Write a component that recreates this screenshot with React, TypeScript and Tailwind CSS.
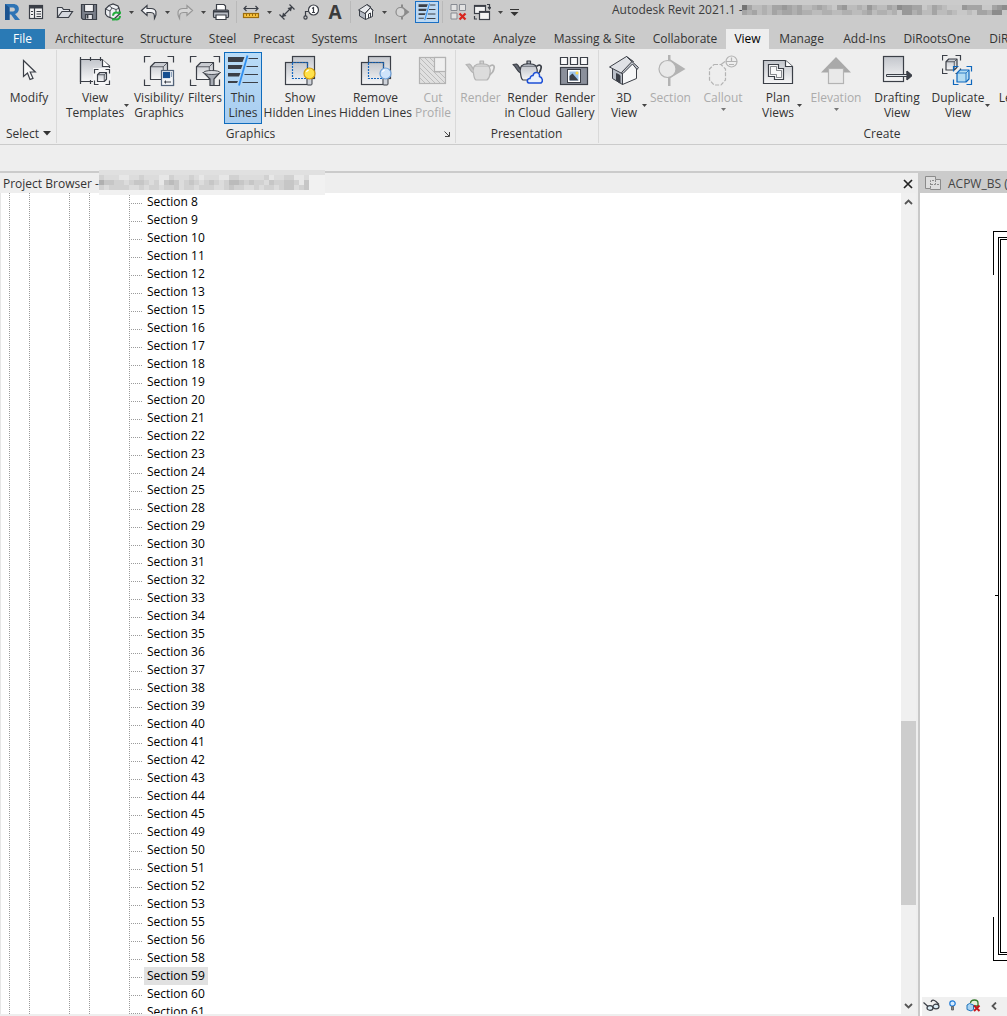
import { useState } from 'react';
import type { ReactNode } from 'react';

const INK = '#3b3f47';
const DIM = '#b3b3b3';

const tabs = [
  { name: 'Architecture', width: 'w-[85px]' },
  { name: 'Structure', width: 'w-[68px]' },
  { name: 'Steel', width: 'w-[45px]' },
  { name: 'Precast', width: 'w-[58px]' },
  { name: 'Systems', width: 'w-[63px]' },
  { name: 'Insert', width: 'w-[49px]' },
  { name: 'Annotate', width: 'w-[69px]' },
  { name: 'Analyze', width: 'w-[61px]' },
  { name: 'Massing & Site', width: 'w-[99px]' },
  { name: 'Collaborate', width: 'w-[82px]' },
  { name: 'View', width: 'w-[43px]' },
  { name: 'Manage', width: 'w-[65px]' },
  { name: 'Add-Ins', width: 'w-[61px]' },
  { name: 'DiRootsOne', width: 'w-[84px]' },
  { name: 'DiRoots', width: 'w-[64px]' },
];

const sections = [
  8, 9, 10, 11, 12, 13, 15, 16, 17, 18, 19, 20, 21, 22, 23, 24, 25,
  28, 29, 30, 31, 32, 33, 34, 35, 36, 37, 38, 39, 40, 41, 42, 43, 44, 45,
  49, 50, 51, 52, 53, 55, 56, 58, 59, 60, 61,
];

// Grey levels of the redacted names, one hex digit per block, one string per row
const titleMosaic = [
  '59bbab9989a9bba9abc98bbab8abb9a78899cb9abccc8999cc9879bc8999',
  '9a9bab9a99a9aabbaabbaabba9baabac88a9bb9bbabccbc99a77ccb9a9aa',
];
const browserMosaic = [
  'cdddeeddcdddeecdddcdedddeeccdddddceddcceed',
  '9bbccdcbbcdcebabdcbcdcbcdcaabcbccdbccbbceb',
  'cdccccddcdccdccbdccdcccddcbccddcdccdcbbdcb',
];

function Mosaic({ rows, step, base }: { rows: string[]; step: number; base: number }) {
  return (
    <svg width={rows[0].length * 5} height={rows.length * 5} className="shrink-0" shapeRendering="crispEdges" aria-hidden="true">
      {rows.map((row, y) =>
        row.split('').map((c, x) => {
          const v = base + parseInt(c, 16) * step;
          return <rect key={`${x}-${y}`} x={x * 5} y={y * 5} width={5} height={5} fill={`rgb(${v},${v},${v})`} />;
        })
      )}
    </svg>
  );
}

function Small({ children, size = 18 }: { children: ReactNode; size?: number }) {
  return (
    <svg width={size} height={size} viewBox="0 0 18 18" fill="none" stroke={INK} strokeWidth="1.2" aria-hidden="true">
      {children}
    </svg>
  );
}

function Large({ children, stroke = INK }: { children: ReactNode; stroke?: string }) {
  return (
    <svg width="32" height="32" viewBox="0 0 32 32" fill="none" stroke={stroke} strokeWidth="1.2" className="shrink-0" aria-hidden="true">
      <defs>
        <linearGradient id="sheet" x1="0" y1="0" x2="0" y2="1">
          <stop offset="0" stopColor="#c3c6cc" />
          <stop offset="1" stopColor="#f6f6f7" />
        </linearGradient>
      </defs>
      {children}
    </svg>
  );
}

function Caret({ className = '' }: { className?: string }) {
  return (
    <svg width="5" height="3" viewBox="0 0 5 3" className={className} aria-hidden="true">
      <path d="M0 0H5L2.5 3Z" fill="#444" />
    </svg>
  );
}

function QatButton({ label, children, active }: { label: string; children: ReactNode; active?: boolean }) {
  return (
    <button
      aria-label={label}
      className={`flex h-[22px] w-6 shrink-0 items-center justify-center ${active ? 'border border-[#1a6fc4] bg-[#bcd8f2]' : ''}`}
    >
      {children}
    </button>
  );
}

function QatArrow({ label }: { label: string }) {
  return (
    <button aria-label={label} className="flex h-[22px] w-3 shrink-0 items-center justify-center">
      <Caret />
    </button>
  );
}

function Divider() {
  return <div className="mr-[2px] ml-[3px] h-[22px] w-px shrink-0 bg-[#b9b9b9]" />;
}

function Cube({ x, y, s, fill = 'url(#sheet)', stroke = INK }: { x: number; y: number; s: number; fill?: string; stroke?: string }) {
  const d = s / 4;
  return (
    <g stroke={stroke} strokeLinejoin="round">
      <path d={`M${x} ${y + d}L${x + d} ${y}H${x + s}V${y + s - d}L${x + s - d} ${y + s}H${x}Z`} fill={fill} />
      <path d={`M${x} ${y + d}H${x + s - d}V${y + s}M${x + s - d} ${y + d}L${x + s} ${y}`} strokeWidth="0.8" />
    </g>
  );
}

function Brackets({ x, y, s, l, stroke = INK }: { x: number; y: number; s: number; l: number; stroke?: string }) {
  return (
    <path
      stroke={stroke}
      d={`M${x} ${y + l}V${y}H${x + l}M${x + s - l} ${y}H${x + s}V${y + l}M${x + s} ${y + s - l}V${y + s}H${x + s - l}M${x + l} ${y + s}H${x}V${y + s - l}`}
    />
  );
}

function ThinLinesShape() {
  return (
    <>
      <path d="M1 2H17.5L15.5 7H1ZM1 10H15.5L14 14H1ZM1 18H13.5L12 21.5H1ZM1 26H11L10 28H1Z" fill={INK} stroke="none" />
      <path d="M21.5 3.5H31M19.5 11.5H31M17.5 19.5H31M15.5 27.5H31" />
      <path d="M20.500 0.500L12 30.500" stroke="#2f8ff0" strokeWidth="1.800" />
    </>
  );
}

function Teapot({ dim }: { dim?: boolean }) {
  return (
    <g stroke={dim ? DIM : INK} strokeLinejoin="round">
      <path d="M9.500 11C7 14 9 24.500 11 25H22C25 23 26.500 16 24 11Z" fill={dim ? '#dcdcdc' : 'url(#sheet)'} />
      <path d="M9.500 11C12 8 21 8 24 11M15 8.500V6H18.500V8.500" fill={dim ? '#d2d2d2' : '#aeb3bc'} />
      <path d="M8.700 18C5 17 4.500 12 1 9.500L4.500 9C7 10.500 7 13 8.800 14.500" fill={dim ? '#c6c6c6' : '#666b75'} />
      <path d="M24.500 11.500C27 9 30 10 29 13.500C28.500 17 26 19 24.500 20" strokeWidth="1.700" />
    </g>
  );
}

function LayeredSheets({ bulb, glow }: { bulb: string; glow: string }) {
  return (
    <>
      <rect x="8.500" y="1.500" width="22" height="22" fill="url(#sheet)" />
      <rect x="1.500" y="7.500" width="22" height="22" fill="url(#sheet)" />
      <path d="M8.500 8V23.500H23.500M8.500 7.500H23.500V22" stroke="#1567c0" strokeDasharray="2 1" />
      <rect x="23" y="23" width="5" height="7" rx="1" fill="#cfd3da" strokeWidth="1" />
      <circle cx="25.500" cy="18.500" r="5.500" fill={bulb} stroke={glow} />
      <path d="M22.500 17C23 15.500 24 15 25 15" stroke="#fff" strokeWidth="1.200" />
    </>
  );
}

const icons: Record<string, ReactNode> = {
  Modify: (
    <Large>
      <path d="M10.500 5.500V21.500L14.500 18L17 24.500L20 23.300L17.200 17H22.300Z" fill="#f8f8f8" />
    </Large>
  ),
  'View Templates': (
    <Large>
      <path d="M1.500 4.500H23L30.500 11V26.500H1.500Z" fill="url(#sheet)" />
      <path d="M23.500 4.500V11.500H30.500" fill="#fff" />
      <path d="M1.500 2V29M11.500 2V6M21.500 2V6M11.500 25V29" />
      <rect x="14" y="13" width="18" height="18" fill="#f5f5f6" stroke="none" />
      <Brackets x={15.5} y={14.5} s={15} l={4} />
      <Cube x={18.500} y={17.500} s={9} />
    </Large>
  ),
  'Visibility/ Graphics': (
    <Large>
      <Brackets x={1.5} y={1.5} s={29} l={6} />
      <Cube x={7.5} y={7.5} s={17} />
      <rect x="18.500" y="15.500" width="12" height="15" fill="#f3f5f8" stroke="#53637a" />
      <rect x="20.500" y="17.500" width="6" height="5" fill="#174f91" stroke="#174f91" />
      <path d="M28.500 17V22" stroke="#8ba0bb" />
      <path d="M21 27H28M22.500 25.500V28.500" strokeWidth="1" />
    </Large>
  ),
  Filters: (
    <Large>
      <Brackets x={1.5} y={1.5} s={29} l={6} />
      <Cube x={7.5} y={7.5} s={17} />
      <path d="M14.500 17.500L21 24V30.500H25V24L31 17.500Z" fill="#a7abb3" />
      <ellipse cx="22.800" cy="17.500" rx="8.200" ry="2" fill="#d8dadf" strokeWidth="0.900" />
    </Large>
  ),
  'Thin Lines': <Large><ThinLinesShape /></Large>,
  'Show Hidden Lines': <Large><LayeredSheets bulb="#ffe14a" glow="#d29a08" /></Large>,
  'Remove Hidden Lines': <Large><LayeredSheets bulb="#cfe4fb" glow="#6d9fd6" /></Large>,
  'Cut Profile': (
    <Large stroke={DIM}>
      <rect x="2.500" y="2.500" width="26" height="26" fill="#e0e0e0" />
      <path d="M3 8L23 28M3 13L18 28M3 18L13 28M3 23L8 28M3 3L28 28M8 3L17 12M13 3L17 7M17 17H22L28 23" strokeWidth="0.800" />
      <rect x="17.500" y="2.500" width="11" height="14" fill="#efefef" />
    </Large>
  ),
  Render: <Large><Teapot dim /></Large>,
  'Render in Cloud': (
    <Large>
      <Teapot />
      <path d="M17 28C14.500 27.500 14.800 23.500 18 23.500C18.500 20.500 20 20.500 21 20.500C22 16 28 17 27.500 21.500C30.500 22.500 31.500 26.500 29 28Z" fill="#e9f0fb" stroke="#1c4fd6" strokeWidth="1.500" />
    </Large>
  ),
  'Render Gallery': (
    <Large>
      <path d="M1.500 2.500H8.500V9.500H1.500ZM11.500 2.500H18.500V9.500H11.500ZM21.500 2.500H28.500V9.500H21.500Z" fill="#fbfbfb" />
      <rect x="1.500" y="12.500" width="27" height="17" fill="#8b909b" />
      <rect x="8.500" y="14.500" width="13" height="13" fill="#fff" strokeWidth="1" />
      <rect x="10.500" y="16.500" width="9" height="9" fill="#9dc3ea" stroke="none" />
      <path d="M10.500 25.500V21L13.500 18.500L19.500 25.500Z" fill={INK} stroke="none" />
      <circle cx="18" cy="18" r="1.500" fill="#ffd94a" stroke="none" />
    </Large>
  ),
  '3D View': (
    <Large>
      <g strokeLinejoin="round" strokeWidth="1">
        <path d="M4.500 13V23.500L14.500 29.500V17.500L9 13Z" fill="#b9bec7" />
        <path d="M14.500 17L24.500 7.500L28.500 12.500V23.500L14.500 29.500Z" fill="#f6f7f8" />
        <path d="M8.500 25.500V18.500L12 20.500V28Z" fill={INK} />
        <path d="M1.500 12L18.500 1.500L25.500 6.500L14 18.500Z" fill="#dfe1e5" />
        <path d="M18.500 1.500L30.500 12.500L29 14.500L24.500 9L15 18.500L13.500 17.500L24 6.500Z" fill="#c3c7ce" />
      </g>
    </Large>
  ),
  Section: (
    <Large stroke={DIM}>
      <path d="M13 0V31H15.500V23L30.500 14L15.500 4.500V0Z" fill={DIM} stroke="none" />
      <circle cx="12.500" cy="14" r="8.500" fill="#e9e9e9" />
    </Large>
  ),
  Callout: (
    <Large stroke={DIM}>
      <path d="M7 9.500H14L18.500 14V25L14 30H7L2.500 25V14Z" strokeDasharray="4 1.500" />
      <path d="M14 9.500L18 6.500" />
      <circle cx="24.500" cy="6.500" r="5.500" />
      <path d="M19 6.500H30M24.500 2.500V6M22 9.500H27" />
    </Large>
  ),
  'Plan Views': (
    <Large>
      <path d="M1.500 5.500H23.500L30.500 11.500V28.500H1.500Z" fill="url(#sheet)" />
      <path d="M23.500 5.500V11.500H30.500" fill="#fff" />
      <path d="M6.500 9.500H16.500V13.500H21.500V24.500H12.500V21.500H6.500Z" fill="#f8f8f9" />
      <path d="M8.500 11.500H14.500V15.500H19.500V22.500H14.500V19.500H8.500Z" strokeWidth="0.600" />
    </Large>
  ),
  Elevation: (
    <Large stroke={DIM}>
      <path d="M16 2L31 17.500H1Z" fill="#a9a9a9" stroke="none" />
      <rect x="8.500" y="13.500" width="15" height="15" fill="#e9e9e9" />
    </Large>
  ),
  'Drafting View': (
    <Large>
      <rect x="2.500" y="1.500" width="20" height="25" fill="url(#sheet)" />
      <path d="M5.500 19.500H26V16L31 20.500L26 25V21.500H5.500Z" fill="#dfe5ea" strokeWidth="1" />
      <path d="M26 16L31 20.500L26 25Z" fill={INK} strokeWidth="1" />
    </Large>
  ),
  'Duplicate View': (
    <Large>
      <Brackets x={0.5} y={0.5} s={18} l={5} />
      <Cube x={4} y={4} s={11} />
      <Brackets x={11.5} y={11.5} s={18} l={5} stroke="#0d67bd" />
      <Cube x={15} y={15} s={12} fill="#b4dcf2" stroke="#0d67bd" />
    </Large>
  ),
  Legends: (
    <Large>
      <rect x="3.500" y="2.500" width="24" height="26" fill="url(#sheet)" />
      <path d="M8 8H14M17 8H24M8 14H14M17 14H24M8 20H14M17 20H24" />
    </Large>
  ),
};

type Tool = {
  name: string;
  lines: string[];
  width: string;
  arrow?: 'side' | 'below';
  disabled?: boolean;
  active?: boolean;
};

const panels: { title: string; className: string; titlePad: string; launcher?: boolean; tools: Tool[] }[] = [
  {
    title: 'Graphics',
    className: 'w-[399px] pl-[9px]',
    titlePad: 'pr-5',
    launcher: true,
    tools: [
      { name: 'View Templates', lines: ['View', 'Templates'], width: 'w-[58px]', arrow: 'side' },
      { name: 'Visibility/ Graphics', lines: ['Visibility/', 'Graphics'], width: 'w-[54px]' },
      { name: 'Filters', lines: ['Filters'], width: 'w-[38px]' },
      { name: 'Thin Lines', lines: ['Thin', 'Lines'], width: 'w-[38px]', active: true },
      { name: 'Show Hidden Lines', lines: ['Show', 'Hidden Lines'], width: 'w-[76px]' },
      { name: 'Remove Hidden Lines', lines: ['Remove', 'Hidden Lines'], width: 'w-[75px]' },
      { name: 'Cut Profile', lines: ['Cut', 'Profile'], width: 'w-[40px]', disabled: true },
    ],
  },
  {
    title: 'Presentation',
    className: 'w-[143px] pl-[3px]',
    titlePad: 'pr-1',
    tools: [
      { name: 'Render', lines: ['Render'], width: 'w-[43px]', disabled: true },
      { name: 'Render in Cloud', lines: ['Render', 'in Cloud'], width: 'w-[51px]' },
      { name: 'Render Gallery', lines: ['Render', 'Gallery'], width: 'w-[44px]' },
    ],
  },
  {
    title: 'Create',
    className: 'w-[564px] pl-[7px]',
    titlePad: 'pr-1',
    tools: [
      { name: '3D View', lines: ['3D', 'View'], width: 'w-[36px]', arrow: 'side' },
      { name: 'Section', lines: ['Section'], width: 'w-[41px]', disabled: true },
      { name: 'Callout', lines: ['Callout'], width: 'w-[48px] ml-2', arrow: 'below', disabled: true },
      { name: 'Plan Views', lines: ['Plan', 'Views'], width: 'w-[38px] ml-3', arrow: 'side' },
      { name: 'Elevation', lines: ['Elevation'], width: 'w-[54px] ml-1', arrow: 'below', disabled: true },
      { name: 'Drafting View', lines: ['Drafting', 'View'], width: 'w-[52px] ml-2' },
      { name: 'Duplicate View', lines: ['Duplicate', 'View'], width: 'w-[54px] ml-2', arrow: 'side' },
      { name: 'Legends', lines: ['Legends'], width: 'w-[50px] ml-1', arrow: 'below' },
    ],
  },
];

function ToolButton({ tool }: { tool: Tool }) {
  return (
    <>
      <button
        disabled={tool.disabled}
        className={`flex h-[72px] shrink-0 flex-col items-center border pt-[2px] leading-[15px] whitespace-nowrap ${tool.width} ${
          tool.active ? 'border-[#0f6cbd] bg-linear-to-b from-[#b9dcf8] to-[#a9cdef]' : 'border-transparent'
        } ${tool.disabled ? 'text-[#ababab]' : 'text-[#333]'}`}
      >
        {icons[tool.name]}
        <span className="mt-[3px] flex flex-col items-center">
          {tool.lines.map(line => <span key={line}>{line}</span>)}
        </span>
        {tool.arrow === 'below' && <Caret className="mt-[3px] opacity-70" />}
      </button>
      {tool.arrow === 'side' && (
        <button aria-label={`${tool.name} options`} className="flex h-[72px] w-2 shrink-0 items-end justify-start pb-[17px]">
          <Caret />
        </button>
      )}
    </>
  );
}

function QuickAccess() {
  return (
    <div className="flex h-[29px] items-start pt-px">
      <div className="flex shrink-0">
        <QatButton label="Revit">
          <svg width="18" height="20" viewBox="0 0 18 20" aria-hidden="true">
            <path fillRule="evenodd" d="M2 2H10C18 2 17 11 12 12L17 18H12L8 12.500H6.500V18H2ZM6.500 5.500V9.500H10C12.500 9.500 12.500 5.500 10 5.500Z" fill="#2f74b5" />
            <path d="M2 2L6.500 5.500V18H2Z" fill="#1d5490" />
          </svg>
        </QatButton>
        <QatButton label="Recent files">
          <Small>
            <rect x="2.500" y="2.500" width="13" height="13" fill="#f3f3f3" />
            <path d="M2.500 4H15.500" strokeWidth="3" />
            <path d="M7.500 5V15.500M4 8.500H6M4 11.500H6M9.500 8.500H14M9.500 11H14M9.500 13.500H14" />
          </Small>
        </QatButton>
      </div>
      <div className="ml-[5px] flex shrink-0">
        <QatButton label="Open">
          <Small>
            <path d="M1.500 14.500V4.500H6L7.500 6.500H13.500V8.500" fill="#e6e8ec" />
            <path d="M1.500 14.500L6 8.500H16.500L12.500 14.500Z" fill="#d5d8de" />
          </Small>
        </QatButton>
        <QatButton label="Save">
          <Small>
            <path d="M1.500 1.500H16.500V16.500H3L1.500 15Z" fill="#7a7f89" />
            <path d="M4.500 1.500H13.500V8.500H4.500Z" fill="#f0f0f1" />
            <path d="M5.500 11.500H12.500V16.500H5.500Z" fill="#e6e6e8" />
            <path d="M7.500 12V15.500" strokeWidth="1.800" />
          </Small>
        </QatButton>
        <QatButton label="Synchronize">
          <Small>
            <path d="M1.500 6L5 2.500L9 1L14 3L15.500 7V11L10 16L3.500 13.500L1.500 11Z" fill="#eef0f3" />
            <path d="M1.500 6L6 8L8 5L12 6.500L15.500 5M6 8V14.500M5 2.500L8 5M12 6.500V10" strokeWidth="0.900" />
            <circle cx="12.500" cy="13" r="3.500" stroke="#21ae3c" strokeWidth="2" strokeDasharray="8 3" />
            <path d="M14 8.500L17 11.500V8.500ZM8 14.500V17.500L11 17.500Z" fill="#21ae3c" stroke="none" />
          </Small>
        </QatButton>
        <QatArrow label="Synchronize options" />
        <QatButton label="Undo">
          <Small><path d="M1.500 7.500L7 2.500V5.500H11C17 5.500 17 11 14.500 15.500C14.500 11 14 9.500 10.500 9.500H7V12.500Z" fill="#f3f4f6" /></Small>
        </QatButton>
        <QatArrow label="Undo options" />
        <QatButton label="Redo">
          <Small><path d="M16.500 7.500L11 2.500V5.500H7C1 5.500 1 11 3.500 15.500C3.500 11 4 9.500 7.500 9.500H11V12.500Z" fill="#d6d6d6" stroke="#969696" /></Small>
        </QatButton>
        <QatArrow label="Redo options" />
        <QatButton label="Print">
          <Small>
            <path d="M4.500 7V1.500H12L13.500 3V7" fill="#fff" />
            <rect x="1.500" y="7" width="15" height="7.500" rx="1" fill="#b9bdc5" />
            <path d="M2 8.500H16" strokeWidth="2" />
            <path d="M4 12H14V16.500H4Z" fill="#fff" />
          </Small>
        </QatButton>
      </div>
      <Divider />
      <div className="flex shrink-0">
        <QatButton label="Measure">
          <Small>
            <path d="M2 5.500H16M4.500 3L2 5.500L4.500 8M13.500 3L16 5.500L13.500 8" />
            <rect x="1.500" y="10.500" width="15" height="4" fill="#f9c440" stroke="#9c6c0b" />
            <path d="M4.500 11V13M7.500 11V13M10.500 11V13M13.500 11V13" stroke="#9c6c0b" strokeWidth="1" />
          </Small>
        </QatButton>
        <QatArrow label="Measure options" />
        <QatButton label="Aligned dimension">
          <Small>
            <path d="M4 14L14 4M1.500 11.500L6.500 16.500M11.500 1.500L16.500 6.500" />
            <path d="M4 14L5 9.500L8.500 13ZM14 4L9.500 5L13 8.500Z" fill={INK} stroke="none" />
          </Small>
        </QatButton>
        <QatButton label="Tag by category">
          <Small>
            <path d="M3.500 13V8.500H7" />
            <circle cx="3.500" cy="14.500" r="1.600" />
            <circle cx="11.500" cy="7" r="5" fill="#fff" />
            <path d="M10 5.500L11.500 4.500V9.500M10 9.500H13" />
          </Small>
        </QatButton>
        <QatButton label="Text">
          <span className="text-[19px] leading-[22px] font-bold text-[#3b3b3b]">A</span>
        </QatButton>
      </div>
      <Divider />
      <div className="ml-px flex shrink-0">
        <QatButton label="Default 3D view">
          <Small>
            <g strokeLinejoin="round" strokeWidth="1">
              <path d="M2.500 7.500V13L8.500 16.500V10L5 6Z" fill="#b4b9c2" />
              <path d="M8.500 9.500L13.500 4.500L15.500 7.500V13.500L8.500 16.500Z" fill="#f6f7f8" />
              <path d="M1.500 7L10 1.500L14 4L8 10.500Z" fill="#e8eaed" />
              <path d="M10 1.500L16.500 7.500M14 4L8 10.500" />
              <path d="M11.500 15V11L13.500 10V14.500" />
            </g>
          </Small>
        </QatButton>
        <QatArrow label="3D view options" />
        <QatButton label="Section">
          <Small>
            <path d="M8 1.500V16.500H10V14L16.500 9L10 4V1.500Z" fill="#8a8a8a" stroke="none" />
            <circle cx="7.500" cy="9" r="4.500" fill="#d4d4d4" stroke="#8a8a8a" />
          </Small>
        </QatButton>
        <div className="ml-px">
          <QatButton label="Thin lines" active>
            <svg width="18" height="18" viewBox="0 0 32 32" fill="none" stroke={INK} strokeWidth="2" aria-hidden="true"><ThinLinesShape /></svg>
          </QatButton>
        </div>
      </div>
      <Divider />
      <div className="ml-px flex shrink-0">
        <QatButton label="Close hidden windows">
          <Small>
            <path d="M2 1.500H8V7.500H2ZM10.500 1.500H16.500V7.500H10.500ZM2 10H8V16H2Z" fill="#e2e2e2" stroke="#878b92" strokeWidth="1" />
            <path d="M10.500 10.500L16.500 16.500M16.500 10.500L10.500 16.500" stroke="#d8261f" strokeWidth="2.300" />
          </Small>
        </QatButton>
        <QatButton label="Switch windows">
          <Small>
            <rect x="1.500" y="2.500" width="11" height="8" fill="#f3f3f3" />
            <path d="M1.500 3H12.500" strokeWidth="1.800" />
            <rect x="6.500" y="8.500" width="10" height="8" fill="#f3f3f3" />
            <path d="M6.500 9H16.500" strokeWidth="1.800" />
            <path d="M14 1.500H16.500V5.500M15 4L16.500 6L18 4M1.500 13V16H4" />
          </Small>
        </QatButton>
        <QatArrow label="Switch windows options" />
        <button aria-label="Customize quick access" className="flex h-[22px] w-4 items-center justify-center">
          <svg width="9" height="7" viewBox="0 0 9 7" aria-hidden="true">
            <path d="M0 0H9V1H0ZM0.500 3H8.500L4.500 7Z" fill="#333" />
          </svg>
        </button>
      </div>
      <div className="ml-[90px] flex shrink-0 items-center gap-1 leading-[18px] text-[#3c3c3c]">
        <h1 className="w-[126px] whitespace-nowrap">Autodesk Revit 2021.1 -</h1>
        <Mosaic rows={titleMosaic} step={12} base={56} />
      </div>
    </div>
  );
}

function ProjectBrowser() {
  const [selected, setSelected] = useState(59);

  return (
    <section className="flex min-w-0 flex-1 flex-col bg-[#eeeeee]">
      <header className="relative flex h-5 shrink-0 items-center justify-between pt-px pr-1 pl-[3px] text-[#333]">
        <h2 className="whitespace-nowrap">Project Browser - P</h2>
        <div className="absolute -top-[3px] left-[99px] h-[25px] w-[226px] border-t-[5px] border-[#e0e0e0] bg-[#f1f1f1]">
          <Mosaic rows={browserMosaic} step={11} base={77} />
        </div>
        <button aria-label="Close project browser" className="flex size-3 items-center justify-center">
          <svg width="10" height="10" viewBox="0 0 10 10" aria-hidden="true">
            <path d="M1 1L9 9M9 1L1 9" stroke="#222" strokeWidth="1.700" />
          </svg>
        </button>
      </header>
      <div className="flex min-h-0 flex-1 border-b-2 border-[#eeeeee] pr-[2px]">
        <ul className="min-w-0 flex-1 overflow-hidden border-l border-[#e6e6e6] bg-white">
          {sections.map(n => (
            <li key={n} className="flex h-[18px] pl-2">
              <Guide className="w-5" />
              <Guide className="w-10" />
              <Guide className="w-5" />
              <Guide className="w-10" />
              <Guide className="w-[2px]" />
              <span className="mt-[10px] mr-px h-px w-3 shrink-0 bg-[repeating-linear-gradient(90deg,#9a9a9a_0_1px,transparent_1px_2px)]" />
              <button
                onClick={() => setSelected(n)}
                className={`px-[3px] pb-px leading-[17px] whitespace-nowrap text-black ${selected === n ? 'bg-[#e1e1e1]' : ''}`}
              >
                Section {n}
              </button>
            </li>
          ))}
        </ul>
        <div className="flex w-[15px] shrink-0 flex-col bg-[#f0f0f0]">
          <button aria-label="Scroll up" className="flex h-[17px] items-center justify-center">
            <svg width="9" height="6" viewBox="0 0 9 6" fill="none" aria-hidden="true"><path d="M1 5L4.500 1.500L8 5" stroke="#555" strokeWidth="1.800" /></svg>
          </button>
          <div className="grow-[511]" />
          <div className="grow-[184] bg-[#cdcdcd]" />
          <div className="grow-[92]" />
          <button aria-label="Scroll down" className="flex h-[17px] items-center justify-center">
            <svg width="9" height="6" viewBox="0 0 9 6" fill="none" aria-hidden="true"><path d="M1 1L4.500 4.500L8 1" stroke="#555" strokeWidth="1.800" /></svg>
          </button>
        </div>
      </div>
    </section>
  );
}

function Guide({ className }: { className: string }) {
  return (
    <span className={`shrink-0 bg-[repeating-linear-gradient(#9a9a9a_0_1px,transparent_1px_2px)] bg-[length:1px_100%] bg-no-repeat ${className}`} />
  );
}

function DrawingArea() {
  return (
    <section className="flex w-[87px] shrink-0 flex-col overflow-hidden bg-white">
      <header className="flex h-5 shrink-0 items-center gap-[6px] bg-[#cbcbcb] pt-px pl-[5px] whitespace-nowrap text-[#444]">
        <svg width="17" height="15" viewBox="0 0 17 15" fill="none" stroke="#8b8b8b" className="shrink-0" aria-hidden="true">
          <path d="M0.500 0.500H10.500V3.500H15.500V13.500H5.500V12.500H0.500Z" fill="#dedede" />
          <path d="M5.500 12V4.500H10.500M10.500 4V8.500H15M6 8.500H10" strokeDasharray="2 1" />
        </svg>
        ACPW_BS (
      </header>
      <div className="min-h-0 flex-1">
        <svg viewBox="0 0 87 804" className="h-full w-full" fill="none" stroke="#000" shapeRendering="crispEdges" aria-hidden="true">
          <path d="M88 38.500H73.500V82M88 767.500H73.500V724" />
          <path d="M88 44.500H78.500V761.500H88M88 46.500H80.500V759.500H88M75 402.500H78" />
        </svg>
      </div>
      <footer className="ml-[2px] flex h-[19px] shrink-0 items-center bg-[#f0f0f0] pb-[2px]">
        <button aria-label="Temporary hide/isolate" className="flex w-[18px] justify-center">
          <svg width="17" height="13" viewBox="0 0 17 13" fill="none" stroke={INK} strokeWidth="1.200" aria-hidden="true">
            <path d="M0.500 3.500L5 7.500M8 3C9 0 11 1 13 2.500L16 5.500" />
            <ellipse cx="7" cy="9" rx="3" ry="2.300" fill="#dceef7" />
            <ellipse cx="13" cy="7.500" rx="3" ry="2.300" fill="#dceef7" />
          </svg>
        </button>
        <button aria-label="Reveal hidden elements" className="flex w-6 justify-center">
          <svg width="7" height="11" viewBox="0 0 7 11" fill="none" aria-hidden="true">
            <circle cx="3.500" cy="3.500" r="2.700" fill="#d5ebff" stroke="#1f7ad6" strokeWidth="1.200" />
            <path d="M2.500 6.500H4.500V10H2.500Z" fill="#888" stroke="#555" strokeWidth="0.800" />
          </svg>
        </button>
        <button aria-label="Worksharing display" className="flex w-[18px] justify-center">
          <svg width="15" height="13" viewBox="0 0 15 13" fill="none" aria-hidden="true">
            <path d="M4.500 4C5 0 12 0 12 4V7H8" fill="#e4f3dd" stroke="#35782b" strokeWidth="1.300" />
            <path d="M1 6L3.500 4.500L7.500 6V10.500L5 12L1 10.500Z" fill="#a9d3f2" stroke="#1f74ba" />
            <path d="M8 6.500L13.500 12M13.500 6.500L8 12" stroke="#c5171c" strokeWidth="2" />
          </svg>
        </button>
        <button aria-label="Scroll left" className="flex w-6 justify-center">
          <svg width="6" height="8" viewBox="0 0 6 8" fill="none" aria-hidden="true"><path d="M5 0.500L1.500 4L5 7.500" stroke="#555" strokeWidth="1.800" /></svg>
        </button>
      </footer>
    </section>
  );
}

export default function App() {
  const [activeTab, setActiveTab] = useState('View');

  return (
    <div className="flex h-screen flex-col overflow-hidden bg-[#eeeeee] font-['Open_Sans','Noto_Sans',sans-serif] text-[12px]">
      <div className="shrink-0 overflow-hidden bg-[#cbcbcb]">
        <QuickAccess />
        <nav className="flex h-5 leading-5 whitespace-nowrap text-[#333]">
          <button className="mr-[2px] w-[45px] shrink-0 bg-[#2a7ab5] text-white">File</button>
          {tabs.map(tab => (
            <button
              key={tab.name}
              onClick={() => setActiveTab(tab.name)}
              className={`shrink-0 ${tab.width} ${activeTab === tab.name ? 'bg-[#eeeeee] text-black' : ''}`}
            >
              {tab.name}
            </button>
          ))}
        </nav>
      </div>

      <div className="flex h-24 shrink-0 overflow-hidden border-b border-[#cbcbcb] pt-px pb-px text-[#333]">
        <div className="flex w-[57px] shrink-0 flex-col border-r border-[#d9d9d9] pt-[2px]">
          <div className="flex pl-1">
            <ToolButton tool={{ name: 'Modify', lines: ['Modify'], width: 'w-[50px]' }} />
          </div>
          <button className="flex h-5 items-center gap-1 pl-[6px]">
            Select
            <svg width="8" height="5" viewBox="0 0 8 5" aria-hidden="true"><path d="M0 0H8L4 4.500Z" fill="#333" /></svg>
          </button>
        </div>
        {panels.map(panel => (
          <div key={panel.title} className={`flex shrink-0 flex-col border-r border-[#d9d9d9] pt-[2px] ${panel.className}`}>
            <div className="flex">
              {panel.tools.map(tool => <ToolButton key={tool.name} tool={tool} />)}
            </div>
            <div className={`relative flex h-5 items-center justify-center ${panel.titlePad}`}>
              {panel.title}
              {panel.launcher && (
                <button aria-label="Graphic display options" className="absolute right-[5px]">
                  <svg width="6" height="6" viewBox="0 0 6 6" fill="none" aria-hidden="true"><path d="M0.500 0.500L5 5M5.500 1V5.500H1" stroke="#444" /></svg>
                </button>
              )}
            </div>
          </div>
        ))}
      </div>

      <div className="h-[28px] shrink-0 border-b-2 border-[#cbcbcb]" />

      <main className="flex min-h-0 flex-1">
        <ProjectBrowser />
        <div className="w-[2px] shrink-0 bg-[#c9c9c9]" />
        <DrawingArea />
      </main>
    </div>
  );
}
